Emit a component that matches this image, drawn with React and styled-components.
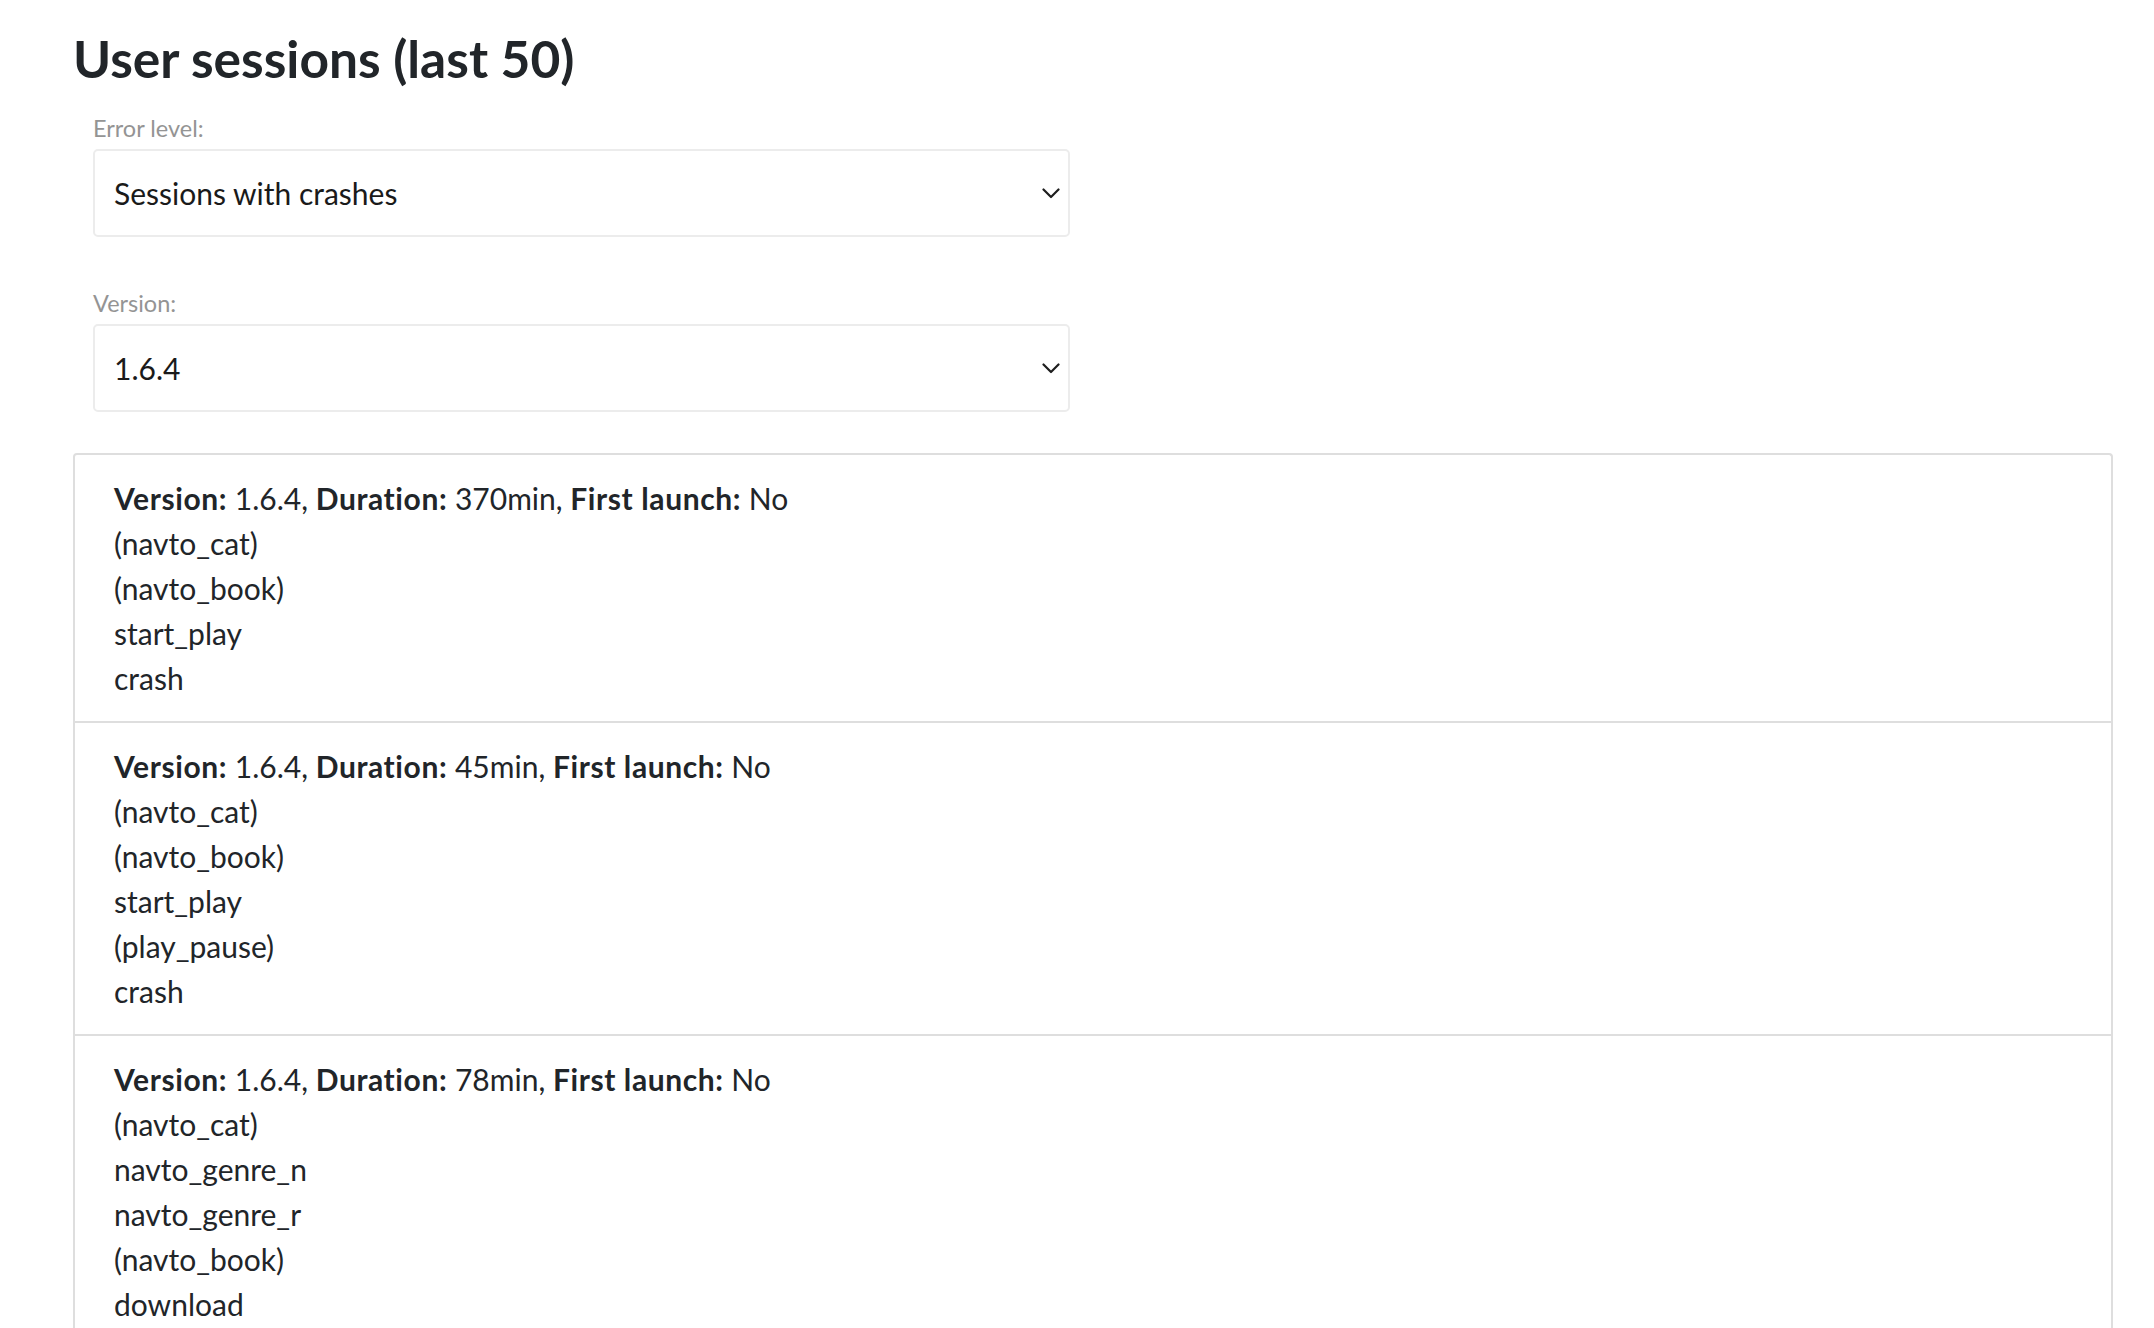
import React from "react";
import styled, { createGlobalStyle } from "styled-components";

const GlobalStyle = createGlobalStyle`
  html, body {
    margin: 0;
    padding: 0;
    background: #ffffff;
  }
  body {
    font-family: Lato, "Noto Sans", "Liberation Sans", sans-serif;
    font-size: 30px;
    line-height: 45px;
    color: #212529;
  }
`;

const sessions = [
  {
    version: "1.6.4",
    duration: "370min",
    firstLaunch: "No",
    events: ["(navto_cat)", "(navto_book)", "start_play", "crash"],
  },
  {
    version: "1.6.4",
    duration: "45min",
    firstLaunch: "No",
    events: ["(navto_cat)", "(navto_book)", "start_play", "(play_pause)", "crash"],
  },
  {
    version: "1.6.4",
    duration: "78min",
    firstLaunch: "No",
    events: [
      "(navto_cat)",
      "navto_genre_n",
      "navto_genre_r",
      "(navto_book)",
      "download",
      "start_play",
      "crash",
    ],
  },
];

function Chevron() {
  return (
    <svg width="18" height="11" viewBox="0 0 18 11" fill="none">
      <polyline
        points="1.5,1.5 9,9 16.5,1.5"
        stroke="#1e1e1e"
        strokeWidth="2.2"
        strokeLinecap="round"
        strokeLinejoin="round"
      />
    </svg>
  );
}

function SelectField({ label, value }) {
  return (
    <Field>
      <Label>{label}</Label>
      <Select>
        <span>{value}</span>
        <Chevron />
      </Select>
    </Field>
  );
}

export default function App() {
  return (
    <>
      <GlobalStyle />
      <Page>
        <Title>User sessions (last 50)</Title>
        <Filters>
          <SelectField label="Error level:" value="Sessions with crashes" />
          <SelectField label="Version:" value="1.6.4" />
        </Filters>
        <List>
          {sessions.map((s, i) => (
            <Item key={i}>
              <Line>
                <b>Version:</b> {s.version}, <b>Duration:</b> {s.duration},{" "}
                <b>First launch:</b> {s.firstLaunch}
              </Line>
              {s.events.map((e, j) => (
                <Line key={j}>{e}</Line>
              ))}
            </Item>
          ))}
        </List>
      </Page>
    </>
  );
}

const Page = styled.div`
  padding: 28px 41px 0 73px;
`;

const Title = styled.h2`
  margin: 0 0 23px;
  font-size: 51.5px;
  line-height: 60px;
  font-weight: 700;
  color: #212529;
`;

const Filters = styled.div`
  display: flex;
  flex-direction: column;
  gap: 49px;
  padding-left: 20px;
`;

const Field = styled.div`
  display: flex;
  flex-direction: column;
  gap: 4px;
  width: 977px;
`;

const Label = styled.label`
  font-size: 23.5px;
  line-height: 34px;
  color: #949494;
`;

const Select = styled.div`
  box-sizing: border-box;
  height: 88px;
  display: flex;
  align-items: center;
  justify-content: space-between;
  padding: 0 8px 0 19px;
  border: 2px solid #ececec;
  border-radius: 5px;
  background: #fff;
  color: #1a1a1a;
`;

const List = styled.div`
  margin-top: 41px;
  border: 2px solid #dedede;
  border-bottom: none;
  border-radius: 4px 4px 0 0;
`;

const Item = styled.div`
  padding: 21px 39px 20px;
  border-bottom: 2px solid #dedede;
`;

const Line = styled.div`
  b {
    font-weight: 700;
    letter-spacing: 0.6px;
  }
`;
